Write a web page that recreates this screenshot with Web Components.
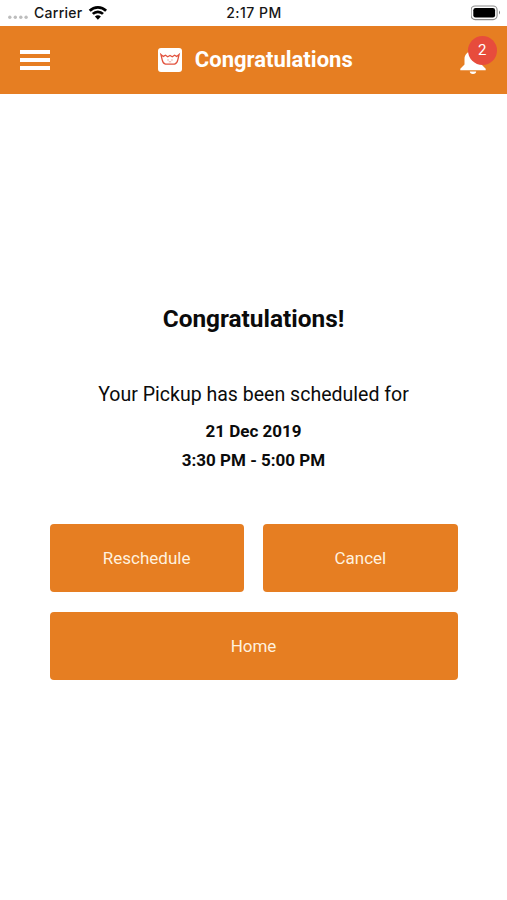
<!DOCTYPE html>
<html lang="en">
<head>
<meta charset="utf-8">
<meta name="viewport" content="width=device-width, initial-scale=1">
<title>Congratulations</title>
<style>
  body {
    margin: 0;
    background: #fff;
    color: #0b0b0b;
    font-family: Roboto, sans-serif;
  }
</style>
</head>
<body>
<pickup-screen>
  <status-bar slot="top" carrier="Carrier" time="2:17 PM"></status-bar>
  <app-header slot="top" count="2">Congratulations</app-header>
  <pickup-summary>
    <span slot="title">Congratulations!</span>
    <span slot="text">Your Pickup has been scheduled for</span>
    <span slot="date">21 Dec 2019</span>
    <span slot="time">3:30 PM - 5:00 PM</span>
  </pickup-summary>
  <button-grid>
    <action-button>Reschedule</action-button>
    <action-button>Cancel</action-button>
    <action-button wide>Home</action-button>
  </button-grid>
</pickup-screen>

<script>
// page column: bars on top, content below
class PickupScreen extends HTMLElement {
  constructor() {
    super()
    this.attachShadow({ mode: 'open' }).innerHTML = `
<style>
  :host { display: flex; flex-direction: column; height: 900px; overflow: hidden; }
  main { display: flex; flex-direction: column; padding: 208px 49.5px 0; }
</style>
<slot name="top"></slot>
<main><slot></slot></main>
`
  }
}

// attributes: carrier, time
class StatusBar extends HTMLElement {
  connectedCallback() {
    this.attachShadow({ mode: 'open' }).innerHTML = `
<style>
  :host {
    display: grid;
    grid-template-columns: 1fr auto 1fr;
    align-items: center;
    box-sizing: border-box;
    height: 25.5px;
    padding: 0 5px 0 7px;
    font: 500 14px/25px Inter, sans-serif;
    color: #161616;
  }
  svg { display: block; }
  .left { display: flex; align-items: center; }
  .carrier { margin: 0 5px 0 6px; letter-spacing: 0.28px; }
  .time { letter-spacing: 0.5px; margin-right: 1px; }
  .right { justify-self: end; }
</style>
<div class="left">
  <svg width="21" height="25" fill="#bdbdbd">
    <circle cx="2.8" cy="17.2" r="1.7"/><circle cx="8.3" cy="17.2" r="1.7"/>
    <circle cx="13.8" cy="17.2" r="1.7"/><circle cx="19.1" cy="17.2" r="1.7"/>
  </svg>
  <span class="carrier"></span>
  <svg width="20" height="25" viewBox="0.4 0 19 25" fill="none" stroke="#000" stroke-width="2.7">
    <path d="M1.6 10.7a11.6 11.6 0 0 1 16.4 0"/>
    <path d="M4.7 13.9a7.2 7.2 0 0 1 10.2 0"/>
    <path d="M9.8 19.7 6.8 16.6a4.3 4.3 0 0 1 6 0z" fill="#000" stroke="none"/>
  </svg>
</div>
<span class="time"></span>
<svg class="right" width="31" height="25">
  <rect x="0.1" y="6" width="26" height="13.6" rx="4" fill="#fff" stroke="#8c8c8c" stroke-width="1.1"/>
  <rect x="2.3" y="7.9" width="21.8" height="9.7" rx="2.3"/>
  <path d="M28 10.6q2 2 0 4z" fill="#777"/>
</svg>
`
    this.shadowRoot.querySelector('.carrier').textContent = this.getAttribute('carrier')
    this.shadowRoot.querySelector('.time').textContent = this.getAttribute('time')
  }
}

// attributes: count (unread notifications)
class AppHeader extends HTMLElement {
  connectedCallback() {
    this.attachShadow({ mode: 'open' }).innerHTML = `
<style>
  :host {
    display: grid;
    grid-template-columns: 1fr auto 1fr;
    align-items: center;
    box-sizing: border-box;
    height: 68px;
    padding: 0 21px 0 20px;
    background: #e67e22;
    color: #fff;
  }
  svg { display: block; }
  .brand { display: flex; align-items: center; gap: 12.5px; margin-left: 5px; }
  h1 { margin: 0; font-size: 22px; line-height: 30px; font-weight: 700; }
  .bell { position: relative; justify-self: end; margin-top: 2px; }
  .badge {
    position: absolute;
    left: 7.5px;
    top: -12px;
    width: 29.5px;
    height: 29.5px;
    border-radius: 50%;
    background: #e74c3c;
    font-size: 15px;
    line-height: 28px;
    text-align: center;
  }
</style>
<svg width="30" height="20" fill="#fff">
  <path d="M0 0h30v4H0zM0 8h30v4H0zM0 16h30v4H0z"/>
</svg>
<div class="brand">
  <svg width="24" height="24" viewBox="0 0 24 24" fill="none" stroke="#e2533f" stroke-width="1.3">
    <rect width="24" height="24" rx="3" fill="#fff" stroke="none"/>
    <path d="M2.900 6.500l2.400 1.900 2.200-1.200 2.200 1.500L12 7.400l2.300 1.300 2.200-1.500 2.200 1.200 2.400-1.900-1.300 5.300q-.9 3.900-3.300 4.400H7.500q-2.400-.5-3.300-4.400z"/>
    <path d="M9.200 12h1.700M13.100 12h1.700M10.800 13.800h2.400" stroke-width="1" opacity=".5"/>
  </svg>
  <h1><slot></slot></h1>
</div>
<div class="bell">
  <svg width="26" height="26" viewBox="0 0 26 26" fill="#fff">
    <path d="M13 0a2 2 0 0 0-2 2v1C7 4 4.500 7 4.500 11v5.500L.3 20.800V22.300h25.400v-1.500L21.500 16.500v-5.500c0-4-2.500-7-6.500-8V2a2 2 0 0 0-2-2zM9.800 23.600a3.200 2.400 0 0 0 6.400 0z"/>
  </svg>
  <span class="badge"></span>
</div>
`
    this.shadowRoot.querySelector('.badge').textContent = this.getAttribute('count')
  }
}

class PickupSummary extends HTMLElement {
  constructor() {
    super()
    this.attachShadow({ mode: 'open' }).innerHTML = `
<style>
  :host { display: flex; flex-direction: column; align-items: center; white-space: nowrap; }
  h2, p { margin: 0; }
  h2 { font-size: 24.4px; line-height: 34px; font-weight: 700; }
  p { font-size: 19.55px; line-height: 30px; margin-top: 44px; }
  .when { font-size: 17px; line-height: 29px; font-weight: 700; margin-top: 7px; text-align: center; }
  .when div { height: 29px; }
</style>
<h2><slot name="title"></slot></h2>
<p><slot name="text"></slot></p>
<div class="when">
  <div><slot name="date"></slot></div>
  <div><slot name="time"></slot></div>
</div>
`
  }
}

class ButtonGrid extends HTMLElement {
  constructor() {
    super()
    this.attachShadow({ mode: 'open' }).innerHTML = `
<style>
  :host { display: grid; grid-template-columns: 1fr 1fr; gap: 19.5px; margin-top: 49px; }
  ::slotted([wide]) { grid-column: span 2; }
</style>
<slot></slot>
`
  }
}

class ActionButton extends HTMLElement {
  constructor() {
    super()
    this.attachShadow({ mode: 'open' }).innerHTML = `
<style>
  :host { display: block; }
  button {
    display: block;
    width: 100%;
    height: 68.5px;
    padding: 0;
    border: 0;
    border-radius: 4px;
    background: #e67e22;
    color: #fff1df;
    font: 400 17px/24px Roboto, sans-serif;
    cursor: pointer;
  }
</style>
<button><slot></slot></button>
`
  }
}

window.customElements.define('pickup-screen', PickupScreen)
window.customElements.define('status-bar', StatusBar)
window.customElements.define('app-header', AppHeader)
window.customElements.define('pickup-summary', PickupSummary)
window.customElements.define('button-grid', ButtonGrid)
window.customElements.define('action-button', ActionButton)
</script>
</body>
</html>
